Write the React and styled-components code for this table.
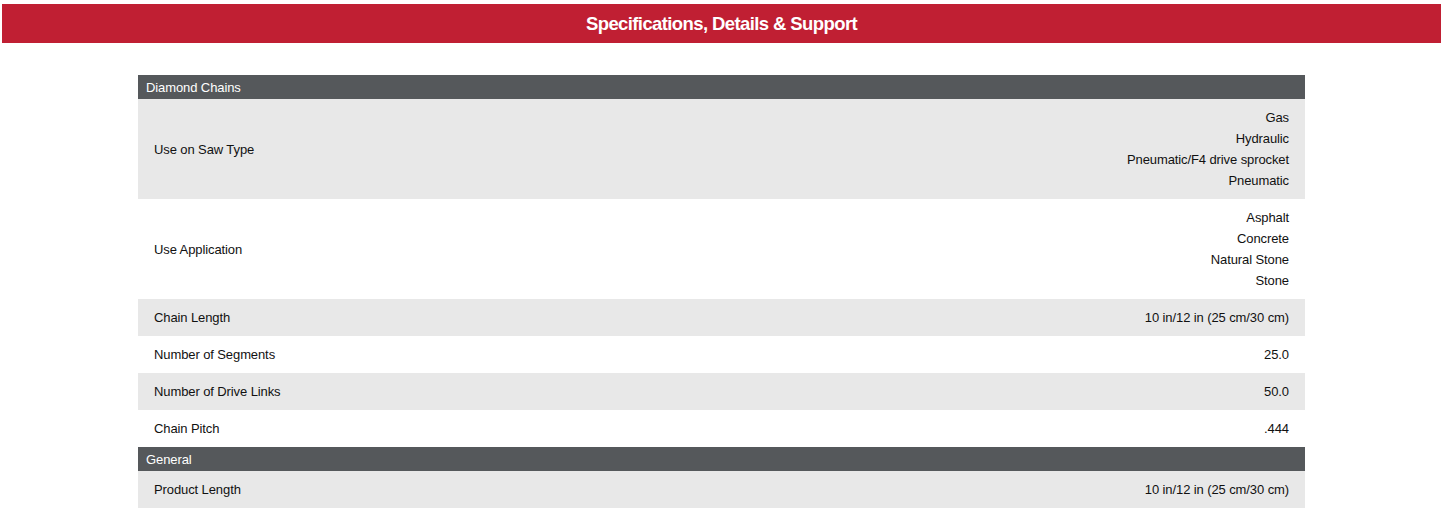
import React from "react";
import styled, { createGlobalStyle } from "styled-components";

const Global = createGlobalStyle`
  html, body { margin: 0; padding: 0; background: #fff; }
  body { font-family: "Liberation Sans", Arial, sans-serif; color: #111; }
`;

const Page = styled.div`
  padding: 4px 4px 0 2px;
`;

const Banner = styled.h2`
  margin: 0;
  height: 39px;
  background: #c01f33;
  color: #fff;
  display: flex;
  align-items: center;
  justify-content: center;
  font-family: "Liberation Sans", Arial, sans-serif;
  font-weight: 700;
  font-size: 18.5px;
  letter-spacing: -0.6px;
`;

const Table = styled.div`
  width: 1167px;
  margin: 32px auto 0;
  font-size: 13px;
  letter-spacing: -0.1px;
`;

const GroupHeader = styled.div`
  height: 24px;
  background: #55585b;
  color: #fff;
  display: flex;
  align-items: center;
  padding: 0 8px;
  font-size: 13px;
`;

const Row = styled.div`
  display: flex;
  justify-content: space-between;
  align-items: center;
  background: ${(p) => (p.$shade ? "#e8e8e8" : "#fff")};
  padding: 8px 16px;
  min-height: 21px;
  line-height: 21px;
`;

const Label = styled.div``;

const Values = styled.div`
  text-align: right;
  display: flex;
  flex-direction: column;
`;

const groups = [
  {
    title: "Diamond Chains",
    rows: [
      ["Use on Saw Type", ["Gas", "Hydraulic", "Pneumatic/F4 drive sprocket", "Pneumatic"]],
      ["Use Application", ["Asphalt", "Concrete", "Natural Stone", "Stone"]],
      ["Chain Length", ["10 in/12 in (25 cm/30 cm)"]],
      ["Number of Segments", ["25.0"]],
      ["Number of Drive Links", ["50.0"]],
      ["Chain Pitch", [".444"]],
    ],
  },
  {
    title: "General",
    rows: [["Product Length", ["10 in/12 in (25 cm/30 cm)"]]],
  },
];

export default function App() {
  return (
    <>
      <Global />
      <Page>
        <Banner>Specifications, Details &amp; Support</Banner>
        <Table>
          {groups.map((g) => (
            <React.Fragment key={g.title}>
              <GroupHeader>{g.title}</GroupHeader>
              {g.rows.map(([label, vals], i) => (
                <Row key={label} $shade={i % 2 === 0}>
                  <Label>{label}</Label>
                  <Values>
                    {vals.map((v) => (
                      <span key={v}>{v}</span>
                    ))}
                  </Values>
                </Row>
              ))}
            </React.Fragment>
          ))}
        </Table>
      </Page>
    </>
  );
}
